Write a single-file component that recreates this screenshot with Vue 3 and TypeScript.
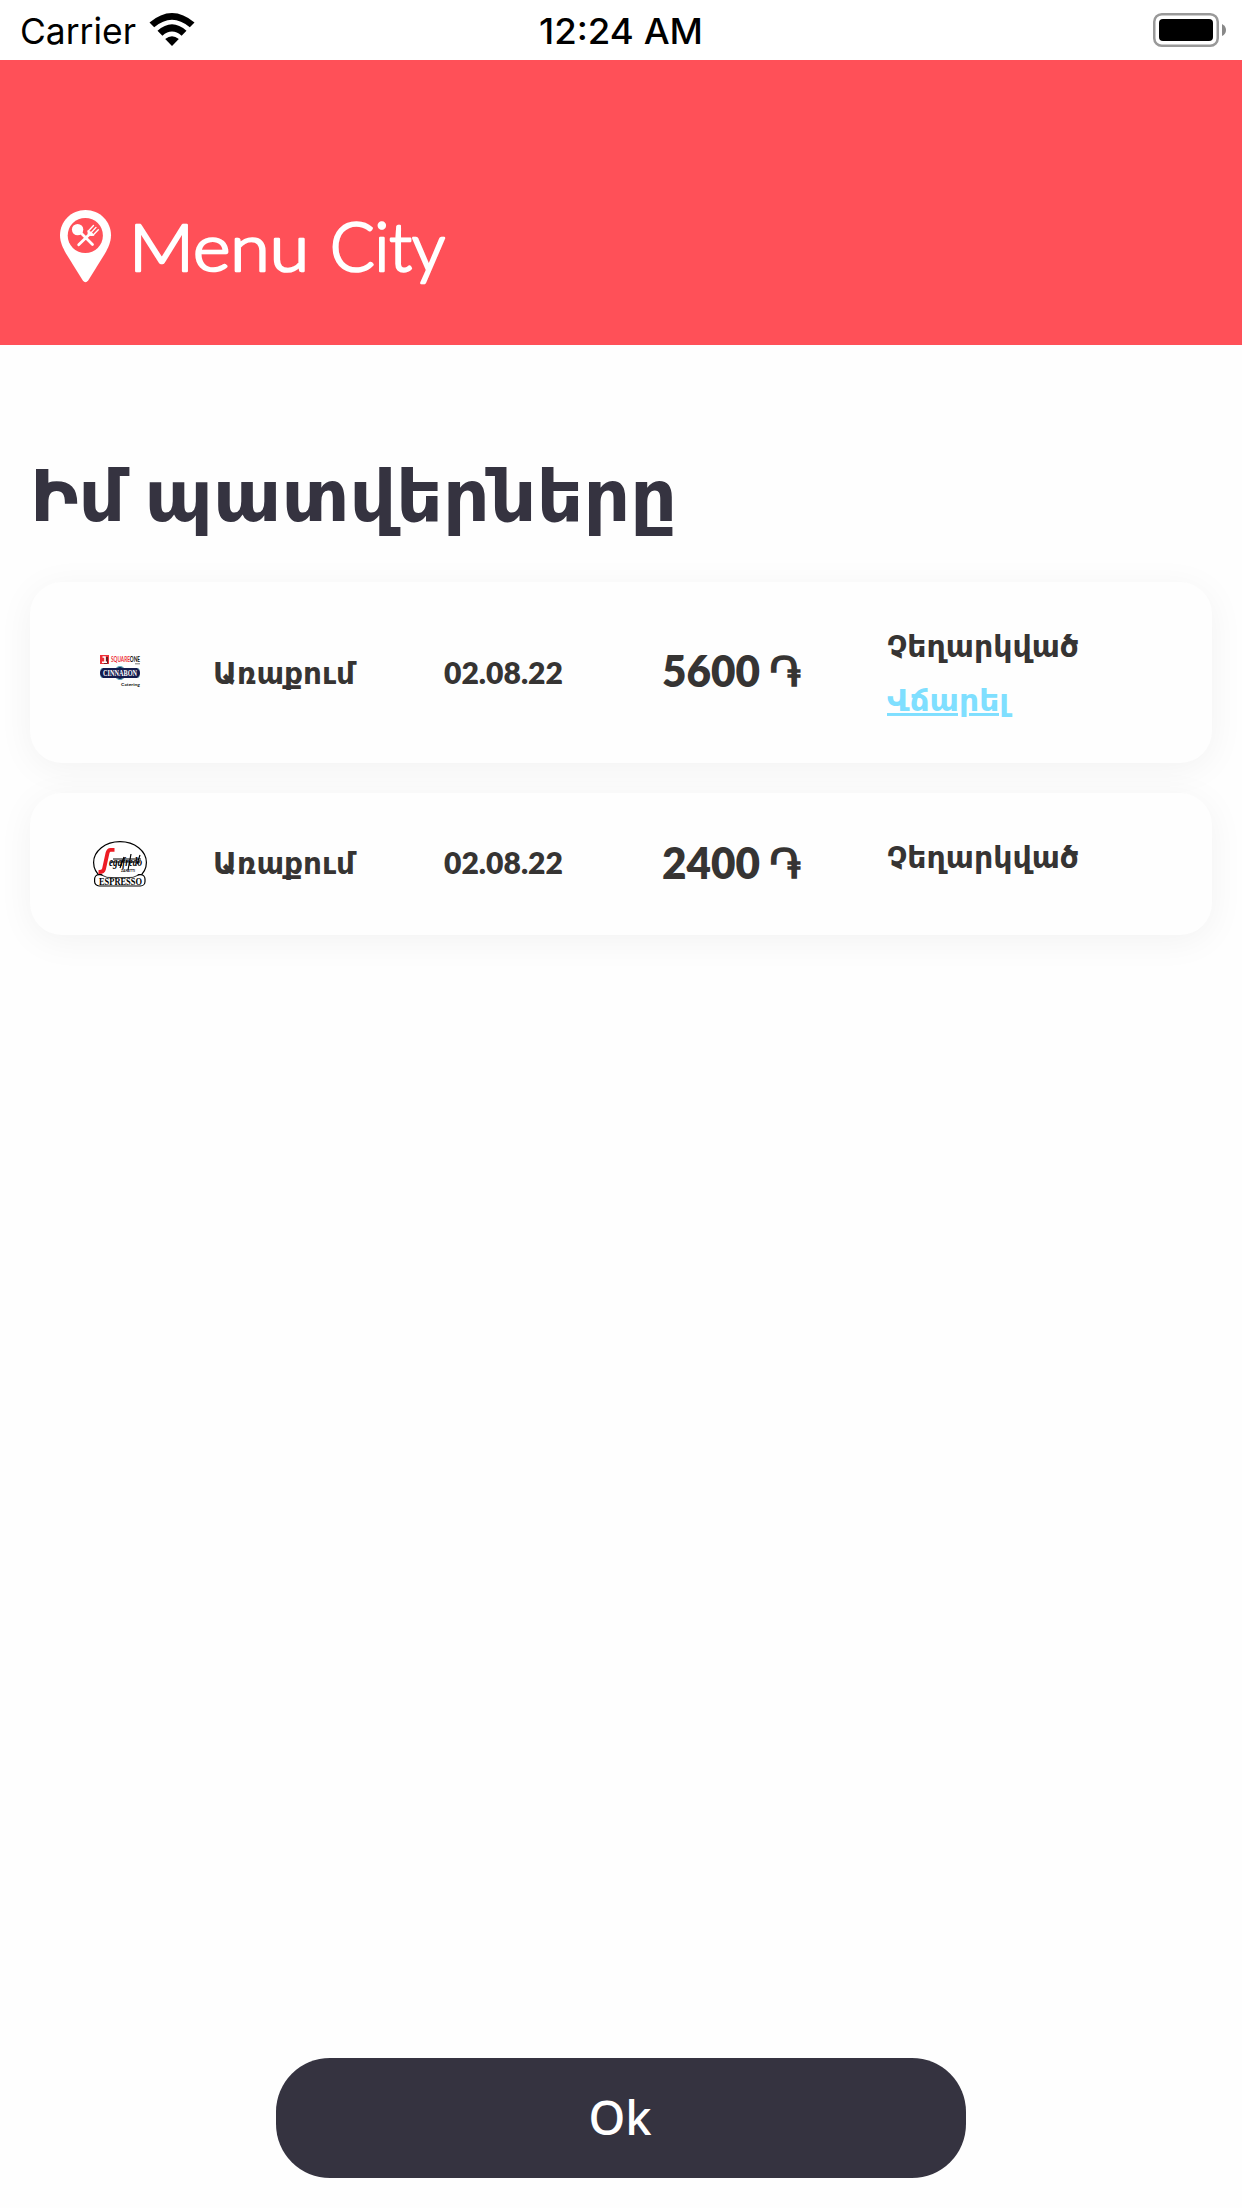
<script setup lang="ts">
import { h, type FunctionalComponent } from 'vue'

interface LabelProps {
  text: string
  width: number
  height: number
  size: number
}

interface Order {
  id: number
  brand: 'cinnabon' | 'segafredo'
  kind: string
  date: string
  amount: string
  status: string
  action?: string
}

// Text line whose advance is fitted to a known width; the baseline is the box bottom.
const Label: FunctionalComponent<LabelProps> = (p) =>
  h('svg', { width: p.width, height: p.height, style: { display: 'block', overflow: 'visible' } }, [
    h(
      'text',
      { x: 0, y: p.height, 'font-size': p.size, textLength: p.width, lengthAdjust: 'spacingAndGlyphs', fill: 'currentColor' },
      p.text,
    ),
  ])
Label.props = ['text', 'width', 'height', 'size']

const orders: Order[] = [
  { id: 1, brand: 'cinnabon', kind: 'Առաքում', date: '02.08.22', amount: '5600', status: 'Չեղարկված', action: 'Վճարել' },
  { id: 2, brand: 'segafredo', kind: 'Առաքում', date: '02.08.22', amount: '2400', status: 'Չեղարկված' },
]
</script>

<template>
  <div class="screen">
    <div class="status-bar">
      <div class="carrier">
        <Label text="Carrier" :width="116" :height="26" :size="36" />
        <svg class="wifi" width="46" height="33" viewBox="0 0 46 33">
          <path d="M0.5 9.5Q23-9.5 45.5 9.5L40.8 14.3Q23-.8 5.2 14.3Z" />
          <path d="M8.5 17.8Q23 4.8 37.5 17.8L32.6 22.7Q23 14.5 13.4 22.7Z" />
          <path d="M16.2 26Q23 20.3 29.8 26L23 33Z" />
        </svg>
      </div>
      <div class="clock"><Label text="12:24 AM" :width="164" :height="26" :size="35.5" /></div>
      <svg class="battery" width="74" height="34" viewBox="0 0 74 34">
        <rect x="1.25" y="1.25" width="63.5" height="31.5" rx="7.5" fill="none" stroke="#999" stroke-width="2.5" />
        <rect x="6" y="6" width="54" height="22" rx="4" />
        <path d="M69 11Q73 13 73 17T69 23Z" fill="#888" />
      </svg>
    </div>

    <header class="banner">
      <svg class="pin" width="52" height="73" viewBox="0 0 52 73">
        <path d="M25.5 0C11.2 0 0 11.4 0 25.2C0 32 3 38 6 43.5L22.8 70.5Q25.5 74 28.2 70.5L45 43.5C48 38 51 32 51 25.2C51 11.4 39.8 0 25.5 0Z" fill="#fff" />
        <circle cx="25.3" cy="25.5" r="17.6" fill="#ff5058" />
        <g stroke="#fff" fill="none" stroke-linecap="round">
          <circle cx="17.6" cy="19.6" r="5.7" fill="#fff" stroke="none" />
          <path d="M20 22L32.5 34.5M18.7 34.7L29.5 24.3" stroke-width="2.8" />
          <path d="M28.2 21.2L33.5 15.5M31.2 22.6L36 17.4M33.2 25L38.3 19.8" stroke-width="1.4" />
          <path d="M28.2 21.2Q27.6 26.4 33.2 25L31.2 22.6Z" fill="#fff" stroke-width="1.4" />
        </g>
      </svg>
      <div class="wordmark">
        <Label text="Menu" :width="180" :height="49" :size="66" />
        <Label text="City" :width="115" :height="49" :size="67" />
      </div>
    </header>

    <main class="content">
      <h1 class="title"><Label text="Իմ պատվերները" :width="647" :height="52" :size="72" /></h1>
      <div class="orders">
        <article v-for="o in orders" :key="o.id" class="card" :class="{ tall: o.action }">
          <div class="logo">
            <svg v-if="o.brand === 'cinnabon'" width="40" height="36" viewBox="0 0 40 36">
              <rect width="9" height="9" fill="#ed2f38" />
              <path d="M4 8H7V2" fill="none" stroke="#111" stroke-width="1.2" />
              <path d="M2.5 2H5V7M2 7.2H7" fill="none" stroke="#fff" stroke-width="1.6" />
              <text x="11" y="7.3" font-size="6.5" textLength="29" lengthAdjust="spacingAndGlyphs" fill="#ed2f38">SQUARE<tspan fill="#111">ONE</tspan></text>
              <path d="M35 8.8H40" stroke="#555" stroke-width=".8" />
              <path d="M3 13H16Q20 9.5 24 13H37Q40 14 40 18T37 23H24Q20 26.5 16 23H3Q0 22 0 18T3 13Z" fill="#131b4d" />
              <path d="M17 12.4Q20 10.5 23 12.4M17 23.6Q20 25.5 23 23.6M.5 14.8L2 13.4M39.5 14.8L38 13.4M.5 21.2L2 22.6M39.5 21.2L38 22.6" stroke="#5ab4c4" fill="none" />
              <text class="serif" x="3" y="21" font-size="9" textLength="34" lengthAdjust="spacingAndGlyphs" fill="#fff">CINNABON</text>
              <text x="21" y="30.8" font-size="4" textLength="19" lengthAdjust="spacingAndGlyphs" fill="#111">Catering</text>
            </svg>
            <svg v-else width="54" height="46" viewBox="0 0 54 46">
              <ellipse cx="27" cy="21.5" rx="26.4" ry="20.9" fill="#fff" stroke="#000" stroke-width="1.2" />
              <rect x="1.6" y="33.6" width="50.4" height="11.4" rx="4.5" fill="#fff" stroke="#000" stroke-width="1.2" />
              <path d="M8.5 33Q27 47 45.5 33Z" fill="#fff" />
              <path d="M7.3 33.6Q14 37.6 21 36.6H33Q40 37.6 46.7 33.6" fill="none" stroke="#000" stroke-width=".8" />
              <path d="M21.5 8.8H17.5Q15.2 8.8 14.5 12L11 28Q10.3 31.2 5.5 31" fill="none" stroke="#ed1c24" stroke-width="3.8" />
              <text class="script" x="16" y="24.5" font-size="13" textLength="33" lengthAdjust="spacingAndGlyphs">egafredo</text>
              <path d="M20 18H48M18 21H47M38 13L35 29M31 16L27 27M47 14L44 23" stroke="#000" stroke-width="1.2" />
              <text x="28" y="30.5" font-size="4" textLength="14" lengthAdjust="spacingAndGlyphs">ZANETTI</text>
              <text class="serif" x="6" y="43.8" font-size="10.5" textLength="43" lengthAdjust="spacingAndGlyphs">ESPRESSO</text>
            </svg>
          </div>
          <div class="kind"><Label :text="o.kind" :width="142" :height="22" :size="29.5" /></div>
          <div class="date"><Label :text="o.date" :width="119" :height="22" :size="30" /></div>
          <div class="amount">
            <Label :text="o.amount" :width="98" :height="31" :size="42.5" />
            <svg class="dram" width="31" height="31" viewBox="0 0 31 31">
              <text x="-1" y="29.5" font-size="41" textLength="32" lengthAdjust="spacingAndGlyphs" fill="currentColor">֏</text>
            </svg>
          </div>
          <div class="state">
            <Label :text="o.status" :width="192" :height="22" :size="29.5" />
            <a v-if="o.action" class="pay"><Label :text="o.action" :width="122" :height="22" :size="29.5" /></a>
          </div>
        </article>
      </div>
    </main>

    <footer class="footer">
      <button class="ok" type="button">Ok</button>
    </footer>
  </div>
</template>

<style>
body {
  margin: 0;
  background: #fefefe;
}
</style>

<style scoped>
.screen {
  width: 1242px;
  height: 2208px;
  display: flex;
  flex-direction: column;
  overflow: hidden;
  background: #fefefe;
  color: #363433;
  font-family: Lato, 'DejaVu Sans', sans-serif;
}
.status-bar {
  height: 60px;
  box-sizing: border-box;
  flex: none;
  display: grid;
  grid-template-columns: 1fr auto 1fr;
  padding: 0 15px 0 20px;
  background: #fff;
  color: #000;
  font-family: Inter, sans-serif;
}
.carrier {
  display: flex;
  gap: 13px;
  padding-top: 18px;
}
.wifi {
  margin-top: -5px;
}
.clock {
  padding: 18px 6px 0 0;
  font-weight: 500;
}
.battery {
  justify-self: end;
  margin-top: 13px;
}
.banner {
  height: 285px;
  box-sizing: border-box;
  flex: none;
  display: flex;
  gap: 17px;
  padding: 150px 60px 0;
  background: #ff5058;
}
.wordmark {
  display: flex;
  gap: 21px;
  padding-top: 12px;
  color: #fff;
  font-weight: 300;
  stroke: #fff;
  stroke-width: 2.6px;
  stroke-linejoin: round;
}
.content {
  flex: 1;
  padding: 124px 30px 0;
}
.title {
  margin: 0;
  color: #353340;
  font-family: 'DejaVu Sans', sans-serif;
  font-weight: 700;
  word-spacing: -6px;
}
.orders {
  display: flex;
  flex-direction: column;
  gap: 30px;
  padding-top: 61px;
}
.card {
  height: 142px;
  display: grid;
  grid-template-columns: 183px 231px 218px 225px 1fr;
  border-radius: 32px;
  background: #fefefe;
  box-shadow: 0 6px 36px rgba(0, 0, 0, 0.05);
  font-weight: 700;
}
.card.tall {
  height: 181px;
}
.logo {
  padding: 48px 0 0 63px;
}
.logo svg {
  display: block;
  overflow: visible;
}
.tall .logo {
  padding: 73px 0 0 70px;
}
.kind,
.date {
  padding-top: 59px;
}
.tall .kind,
.tall .date {
  padding-top: 80px;
}
.date,
.amount {
  font-weight: 800;
}
.amount {
  display: flex;
  gap: 10px;
  padding-top: 55px;
}
.tall .amount {
  padding-top: 74px;
}
.dram {
  overflow: visible;
  font-weight: 700;
}
.state {
  padding-top: 53px;
}
.pay {
  display: block;
  width: 122px;
  margin-top: 32px;
  color: #7fdfff;
}
.pay :deep(text) {
  text-decoration: underline;
  text-decoration-thickness: 2px;
}
.script {
  font-family: 'Liberation Serif', serif;
  font-style: italic;
  font-weight: 700;
}
.serif {
  font-family: 'Liberation Serif', serif;
  font-weight: 700;
}
.footer {
  height: 150px;
  flex: none;
  padding-left: 276px;
}
.ok {
  width: 690px;
  height: 120px;
  border: 0;
  border-radius: 54px;
  padding: 0 2px 2px 0;
  background: #353340;
  color: #fff;
  font: 500 47px 'Noto Sans', sans-serif;
}
</style>
